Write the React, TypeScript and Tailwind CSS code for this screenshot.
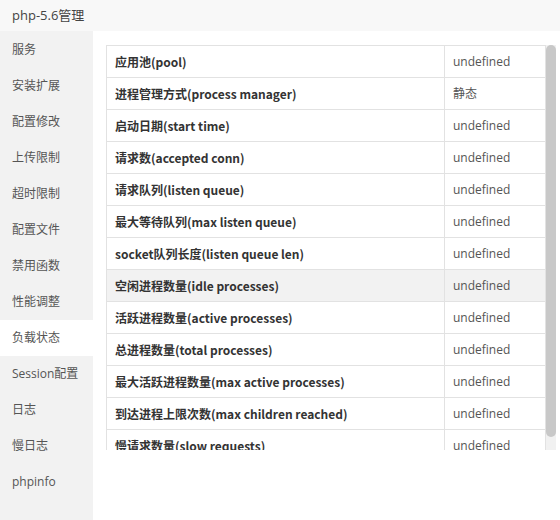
import React from 'react';

const menus = [
  '服务',
  '安装扩展',
  '配置修改',
  '上传限制',
  '超时限制',
  '配置文件',
  '禁用函数',
  '性能调整',
  '负载状态',
  'Session配置',
  '日志',
  '慢日志',
  'phpinfo',
];

const rows: [string, string][] = [
  ['应用池(pool)', 'undefined'],
  ['进程管理方式(process manager)', '静态'],
  ['启动日期(start time)', 'undefined'],
  ['请求数(accepted conn)', 'undefined'],
  ['请求队列(listen queue)', 'undefined'],
  ['最大等待队列(max listen queue)', 'undefined'],
  ['socket队列长度(listen queue len)', 'undefined'],
  ['空闲进程数量(idle processes)', 'undefined'],
  ['活跃进程数量(active processes)', 'undefined'],
  ['总进程数量(total processes)', 'undefined'],
  ['最大活跃进程数量(max active processes)', 'undefined'],
  ['到达进程上限次数(max children reached)', 'undefined'],
  ['慢请求数量(slow requests)', 'undefined'],
];

export default function App() {
  const active = '负载状态';
  const hovered = 7;

  return (
    <div className="w-[560px] h-[520px] flex flex-col bg-white overflow-hidden font-['Open_Sans','Noto_Sans_CJK_SC',sans-serif]">
      <div className="h-[31px] shrink-0 bg-[#f8f8f8] flex items-center px-3 text-[13px] text-[#444]">
        php-5.6管理
      </div>
      <div className="flex flex-1 min-h-0">
        <div className="w-[93px] shrink-0 bg-[#f2f2f2] pt-px">
          {menus.map((m) => (
            <div
              key={m}
              className={`h-9 flex items-center pl-3 text-[12px] text-[#555] ${
                m === active ? 'bg-white' : ''
              }`}
            >
              {m}
            </div>
          ))}
        </div>
        <div className="flex-1 pl-[13px] pt-[14px]">
          <div className="flex h-[405px] w-[450px]">
            <div className="w-[440px] h-full overflow-hidden">
              <table className="w-full border-collapse text-[12px]">
                <tbody>
                  {rows.map(([label, value], i) => (
                    <tr key={label} className={i === hovered ? 'bg-[#f2f2f2]' : ''}>
                      <td className="h-8 border border-[#e2e2e2] pl-2 font-bold text-[#333] font-['Noto_Sans_CJK_SC',sans-serif]">
                        {label}
                      </td>
                      <td className="w-[101px] h-8 border border-[#e2e2e2] pl-2 text-[#555]">
                        {value}
                      </td>
                    </tr>
                  ))}
                </tbody>
              </table>
            </div>
            {/* 滚动条 */}
            <div className="w-[10px] h-full bg-[#f1f1f1]">
              <div className="h-[392px] rounded-[5px] bg-[#c8c8c8]" />
            </div>
          </div>
        </div>
      </div>
    </div>
  );
}
